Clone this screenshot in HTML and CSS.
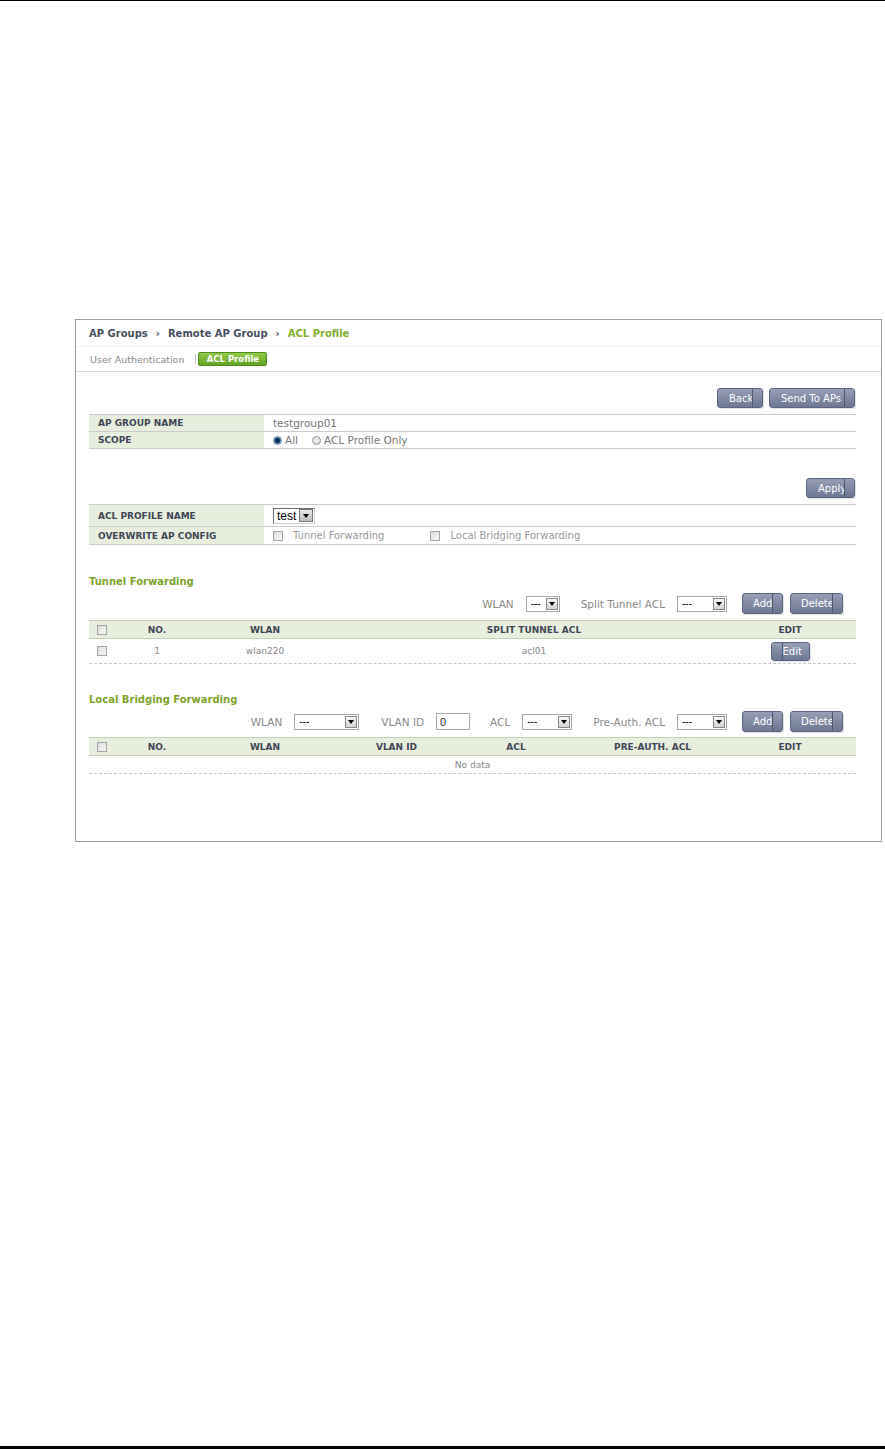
FILE: index.html
```html
<!DOCTYPE html>
<html>
<head>
<meta charset="utf-8">
<title>ACL Profile</title>
<link rel="stylesheet" href="styles.css">
</head>
<body>
<div class="page">
  <div class="rule-top"></div>
  <div class="panel">
    <div class="crumbs">
      <span class="crumb">AP Groups</span><span class="sep">›</span><span class="crumb">Remote AP Group</span><span class="sep">›</span><span class="crumb current">ACL Profile</span>
    </div>
    <div class="tabs">
      <span class="tab">User Authentication</span><span class="tab-sep"></span><span class="tab active">ACL Profile</span>
    </div>
    <div class="content">
      <div class="actions">
        <span class="btn w-back">Back</span>
        <span class="btn w-send">Send To APs</span>
      </div>
      <div class="form first">
        <div class="frow h17"><div class="flabel">AP GROUP NAME</div><div class="fval">testgroup01</div></div>
        <div class="frow h17"><div class="flabel">SCOPE</div><div class="fval"><span class="radio on"></span><span>All</span><span class="radio sp"></span><span>ACL Profile Only</span></div></div>
      </div>
      <div class="actions apply-row">
        <span class="btn w-apply">Apply</span>
      </div>
      <div class="form">
        <div class="frow h22"><div class="flabel">ACL PROFILE NAME</div><div class="fval"><span class="sel sel-test"><span class="txt">test</span><span class="arr"></span></span></div></div>
        <div class="frow h18"><div class="flabel">OVERWRITE AP CONFIG</div><div class="fval light"><span class="cb"></span><span>Tunnel Forwarding</span><span class="cb sp2"></span><span>Local Bridging Forwarding</span></div></div>
      </div>

      <div class="sec sec1">Tunnel Forwarding</div>
      <div class="ctrls">
        <span class="lbl">WLAN</span>
        <span class="sel w34"><span class="txt">---</span><span class="arr"></span></span>
        <span class="lbl ml21">Split Tunnel ACL</span>
        <span class="sel w50"><span class="txt">---</span><span class="arr"></span></span>
        <span class="btn w-add ml15">Add</span>
        <span class="btn w-del ml7">Delete</span>
      </div>
      <div class="thead grid-t">
        <div class="cell cbcell"><span class="cb"></span></div>
        <div class="cell">NO.</div>
        <div class="cell">WLAN</div>
        <div class="cell">SPLIT TUNNEL ACL</div>
        <div class="cell">EDIT</div>
        <div></div>
      </div>
      <div class="trow grid-t h25">
        <div class="cell cbcell"><span class="cb"></span></div>
        <div class="cell">1</div>
        <div class="cell">wlan220</div>
        <div class="cell">acl01</div>
        <div class="cell"><span class="btn capleft w-edit">Edit</span></div>
        <div></div>
      </div>

      <div class="sec sec2">Local Bridging Forwarding</div>
      <div class="ctrls c2">
        <span class="lbl">WLAN</span>
        <span class="sel w65"><span class="txt">---</span><span class="arr"></span></span>
        <span class="lbl ml22">VLAN ID</span>
        <span class="inp">0</span>
        <span class="lbl ml20">ACL</span>
        <span class="sel w50"><span class="txt">---</span><span class="arr"></span></span>
        <span class="lbl ml21">Pre-Auth. ACL</span>
        <span class="sel w50"><span class="txt">---</span><span class="arr"></span></span>
        <span class="btn w-add ml15">Add</span>
        <span class="btn w-del ml7">Delete</span>
      </div>
      <div class="thead grid-l t2">
        <div class="cell cbcell"><span class="cb"></span></div>
        <div class="cell">NO.</div>
        <div class="cell">WLAN</div>
        <div class="cell">VLAN ID</div>
        <div class="cell">ACL</div>
        <div class="cell">PRE-AUTH. ACL</div>
        <div class="cell">EDIT</div>
        <div></div>
      </div>
      <div class="trow nodata">No data</div>
    </div>
  </div>
  <div class="rule-bottom"></div>
</div>
</body>
</html>
```

FILE: styles.css
```css
* { box-sizing: border-box; }
html, body { margin: 0; padding: 0; background: #fff; }
body {
  font-family: "DejaVu Sans", Verdana, sans-serif;
  font-size: 10px;
  color: #777;
}
.page {
  height: 1449px;
  display: flex;
  flex-direction: column;
  overflow: hidden;
}
.rule-top { height: 1px; background: #000; flex: none; }
.rule-bottom { height: 3px; background: #000; margin-top: auto; flex: none; }

.panel {
  flex: none;
  margin: 318px 0 0 75px;
  width: 807px;
  height: 523px;
  border: 1px solid #9c9c9c;
}

/* breadcrumb */
.crumbs {
  height: 27px;
  border-bottom: 1px solid #efefef;
  padding-left: 13px;
  display: flex;
  align-items: center;
  font-weight: bold;
  font-size: 10px;
  color: #46505f;
}
.crumbs .sep { margin: 0 8px; font-weight: bold; }
.crumbs .current { color: #84ad2c; }

/* tabs */
.tabs {
  height: 25px;
  border-bottom: 1px solid #dcdcdc;
  padding-left: 14px;
  display: flex;
  align-items: center;
}
.tab { font-size: 9.5px; color: #8a8a8a; }
.tab-sep { width: 1px; height: 10px; background: #c8c8c8; margin: 0 2px 0 11px; }
.tab.active {
  width: 69px;
  height: 14px;
  display: flex;
  align-items: center;
  justify-content: center;
  background: linear-gradient(#93c94a, #62a325);
  border: 1px solid #4f8c1b;
  border-radius: 2px;
  color: #fff;
  font-weight: bold;
  font-size: 8.5px;
}

.content { padding: 0 25px 0 13px; }

/* buttons */
.actions {
  display: flex;
  justify-content: flex-end;
  gap: 6px;
  margin-top: 16px;
  height: 20px;
  padding-right: 1px;
}
.apply-row { margin-top: 29px; }
.btn {
  position: relative;
  display: inline-flex;
  align-items: center;
  flex: none;
  height: 20px;
  padding-left: 11px;
  overflow: hidden;
  white-space: nowrap;
  background: linear-gradient(#979fb6, #6f7893);
  border: 1px solid #5b6480;
  border-radius: 3px;
  color: #fff;
  font-size: 10px;
  box-shadow: 1px 1px 1px rgba(0, 0, 0, 0.12);
}
.btn::after {
  content: "";
  position: absolute;
  top: 0;
  right: 0;
  bottom: 0;
  width: 9px;
  background: linear-gradient(#959db4, #6c758f);
  border-left: 1px solid #4e5671;
}
.btn.capleft::after {
  right: auto;
  left: 0;
  width: 10px;
  border-left: none;
  border-right: 1px solid #4e5671;
}
.w-back { width: 46px; }
.w-send { width: 86px; }
.w-apply { width: 49px; }
.w-add { width: 41px; height: 21px; padding-left: 10px; }
.w-del { width: 53px; height: 21px; padding-left: 10px; }
.w-edit { width: 39px; height: 19px; }

/* form tables */
.form { margin-top: 6px; border-top: 1px solid #cccccc; }
.frow { display: flex; border-bottom: 1px solid #cccccc; }
.h17 { height: 17px; }
.h22 { height: 22px; }
.h18 { height: 18px; }
.flabel {
  width: 175px;
  flex: none;
  background: #e8eedd;
  padding-left: 9px;
  display: flex;
  align-items: center;
  font-weight: bold;
  font-size: 9px;
  color: #3f4656;
}
.fval {
  padding-left: 9px;
  display: flex;
  align-items: center;
  color: #777;
  font-size: 10.5px;
}
.fval.light { color: #999; font-size: 10px; }

.radio {
  width: 9px;
  height: 9px;
  border-radius: 50%;
  border: 1px solid #9a9a9a;
  background: radial-gradient(circle, #f4f4f4 0, #d6d6d6 100%);
  margin-right: 3px;
  flex: none;
}
.radio.on {
  border-color: #6f8aa8;
  background: radial-gradient(circle, #0e2d55 0, #0e2d55 2px, #4f86bd 3px, #dfe6ee 4px);
}
.radio.sp { margin-left: 14px; }

.cb {
  display: inline-block;
  width: 10px;
  height: 10px;
  border: 1px solid #a4a4a4;
  background: linear-gradient(135deg, #dcdcdc, #f8f8f8);
  margin-right: 10px;
  flex: none;
}
.cb.sp2 { margin-left: 46px; }

/* selects */
.sel {
  display: inline-flex;
  align-items: center;
  justify-content: space-between;
  flex: none;
  height: 16px;
  border: 1px solid #a9a9a9;
  background: #fff;
  color: #000;
  font-size: 9px;
}
.sel .txt { padding-left: 4px; font-family: "Liberation Sans", Arial, sans-serif; font-size: 10px; }
.sel .arr {
  width: 12px;
  height: 12px;
  margin-right: 1px;
  border: 1px solid #8a8a8a;
  background: linear-gradient(#f6f6f6, #d4d4d4);
  display: flex;
  align-items: center;
  justify-content: center;
}
.sel .arr::before {
  content: "";
  border-left: 3px solid transparent;
  border-right: 3px solid transparent;
  border-top: 4px solid #000;
}
.sel-test {
  width: 42px;
  height: 16px;
  border: 1px solid #6e6e6e;
  border-right-color: #d0d0d0;
  border-bottom-color: #d0d0d0;
}
.sel-test .txt { font-size: 12px; padding-left: 3px; }
.sel-test .arr { width: 14px; height: 13px; background: linear-gradient(#e8e8e8, #bdbdbd); border-color: #777; }
.w34 { width: 34px; }
.w50 { width: 50px; }
.w65 { width: 65px; }

.inp {
  display: inline-flex;
  align-items: center;
  flex: none;
  width: 34px;
  height: 17px;
  padding-left: 3px;
  border: 1px solid #a9a9a9;
  color: #333;
  font-family: "Liberation Sans", Arial, sans-serif;
  font-size: 11px;
}

/* sections */
.sec {
  height: 14px;
  line-height: 14px;
  font-weight: bold;
  font-size: 10px;
  color: #7ea42b;
}
.sec1 { margin-top: 30px; }
.sec2 { margin-top: 29px; }

.ctrls {
  margin-top: 4px;
  height: 21px;
  display: flex;
  align-items: center;
  justify-content: flex-end;
  padding-right: 13px;
}
.lbl { font-size: 10.5px; color: #8a8a8a; margin-right: 12px; white-space: nowrap; }
.ml21 { margin-left: 21px; }
.ml22 { margin-left: 22px; }
.ml20 { margin-left: 20px; }
.ml15 { margin-left: 15px; }
.ml7 { margin-left: 7px; }

/* data tables */
.thead {
  margin-top: 6px;
  height: 19px;
  background: #e8eedd;
  border-top: 1px solid #c6d0b2;
  border-bottom: 1px solid #c6d0b2;
  font-weight: bold;
  font-size: 9px;
  color: #3f4656;
}
.thead.t2 { margin-top: 5px; }
.grid-t {
  display: grid;
  grid-template-columns: 30px 76px 140px 398px 114px 1fr;
  align-items: center;
}
.grid-l {
  display: grid;
  grid-template-columns: 30px 76px 140px 123px 116px 157px 118px 1fr;
  align-items: center;
}
.cell { text-align: center; display: flex; justify-content: center; align-items: center; }
.cell.cbcell { justify-content: flex-start; padding-left: 8px; }
.cell.cbcell .cb { margin-right: 0; }
.trow {
  border-bottom: 1px dashed #c8c8c8;
  font-size: 9px;
  color: #888;
}
.h25 { height: 25px; }
.nodata {
  height: 18px;
  display: flex;
  align-items: center;
  justify-content: center;
}
```
